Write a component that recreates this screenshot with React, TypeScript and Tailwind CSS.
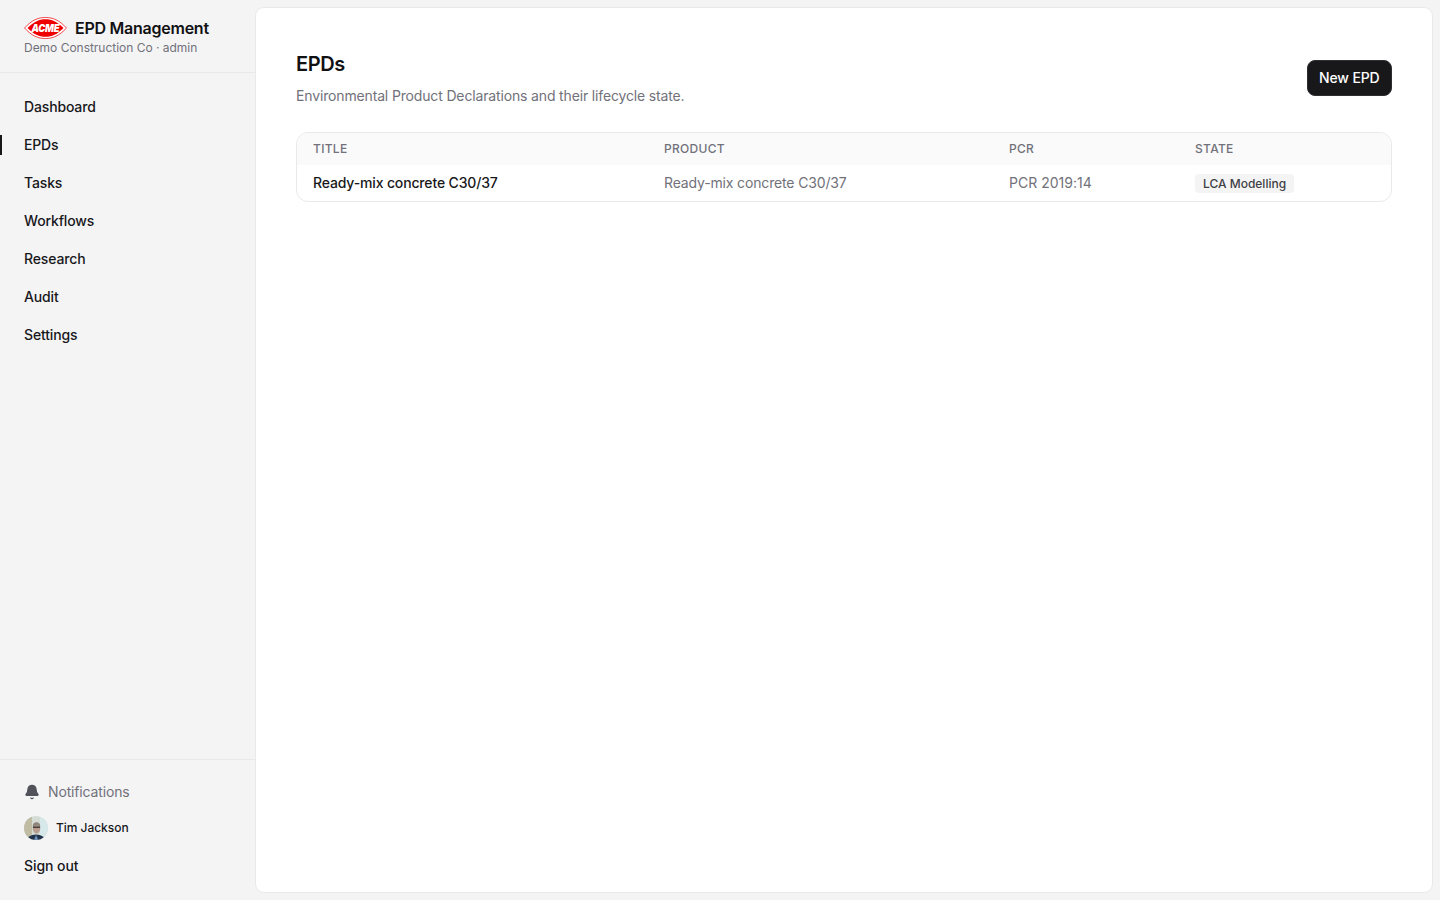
import { Bell } from "lucide-react";

const navItems = ["Dashboard", "EPDs", "Tasks", "Workflows", "Research", "Audit", "Settings"];

function AcmeLogo() {
  return (
    <div className="relative w-[43px] h-[22px] shrink-0">
      <svg viewBox="0 0 43 22" className="w-[43px] h-[22px]">
        <path d="M0.5 11 C8 3 14 0.5 21.5 0.5 C29 0.5 35 3 42.5 11 C35 19 29 21.500 21.5 21.500 C14 21.500 8 19 0.5 11 Z" fill="#fff" stroke="#ee1c25" strokeWidth="0.8" />
        <path d="M3.500 11 C10 4.500 15 2.200 21.5 2.200 C28 2.200 33 4.500 39.500 11 C33 17.500 28 19.800 21.500 19.800 C15 19.800 10 17.500 3.500 11 Z" fill="#ee0000" />
      </svg>
      <span className="absolute inset-0 flex items-center justify-center text-[11px] leading-none font-black italic tracking-[-0.2px] text-white font-['Inter',sans-serif] scale-x-[0.85]">
        ACME
      </span>
    </div>
  );
}

function Avatar() {
  return (
    <svg viewBox="0 0 24 24" className="w-6 h-6 rounded-full shrink-0">
      <rect width="24" height="24" fill="#d5dcd6" />
      <rect x="0" y="0" width="8" height="24" fill="#c0bca4" />
      <rect x="16" y="0" width="8" height="24" fill="#d6e8ea" />
      <path d="M2 24 Q4 19 12 18.500 Q20 19 22 24 Z" fill="#22324a" />
      <path d="M10 24 L12 19 L14.500 24 Z" fill="#6f8fb5" />
      <ellipse cx="12.500" cy="12" rx="3.800" ry="5.500" fill="#b89c8e" />
      <path d="M8.700 10.500 Q9 6.300 12.500 6.300 Q16 6.300 16.300 10.500 Q12.500 8.300 8.700 10.500 Z" fill="#8d847c" />
      <rect x="9" y="10.500" width="7" height="1.400" fill="#3d3633" />
    </svg>
  );
}

export default function App() {
  return (
    <div className="flex h-[900px] bg-[#f4f4f5] text-[#18181b] text-sm tracking-[-0.15px] font-['Inter',sans-serif]">
      <aside className="w-[256px] shrink-0 flex flex-col">
        <div className="h-[73px] border-b border-[#e9e9eb] px-6 pt-[17px]">
          <div className="flex items-center gap-2 h-[22px]">
            <AcmeLogo />
            <span className="text-base font-semibold leading-[22px] tracking-[-0.25px] text-[#111113]">EPD Management</span>
          </div>
          <div className="text-xs leading-4 mt-px tracking-[-0.02px] text-[#71717a]">Demo Construction Co · admin</div>
        </div>
        <nav className="flex flex-col flex-1 pt-[15px]">
          {navItems.map((item) => (
            <div key={item} className="relative h-[38px] flex items-center px-6 font-medium text-[#18181b]">
              {item === "EPDs" && <span className="absolute left-0 top-[9px] w-0.5 h-5 bg-[#18181b]" />}
              {item}
            </div>
          ))}
        </nav>
        <div className="h-[141px] border-t border-[#e9e9eb] px-6 pt-[24px]">
          <div className="flex items-center gap-2 h-4 text-[#71717a]">
            <Bell size={16} fill="#52525b" stroke="#52525b" strokeWidth={2} />
            <span>Notifications</span>
          </div>
          <div className="flex items-center gap-2 h-6 mt-[16px]">
            <Avatar />
            <span className="text-xs font-medium tracking-[-0.04px] text-[#18181b]">Tim Jackson</span>
          </div>
          <div className="mt-[16px] font-medium leading-5 tracking-[-0.08px] text-[#18181b]">Sign out</div>
        </div>
      </aside>
      <main className="flex-1 m-2 ml-0 h-[884px] bg-white ring-1 ring-[#e9e9eb] rounded-lg px-10 pt-[44px]">
        <div className="flex items-start justify-between">
          <div>
            <h1 className="text-xl leading-6 font-semibold tracking-[-0.4px] text-[#111113]">EPDs</h1>
            <p className="mt-[10px] leading-5 text-[#71717a]">Environmental Product Declarations and their lifecycle state.</p>
          </div>
          <button className="mt-[8px] h-9 px-[11.5px] rounded-lg bg-[#18181b] border border-[#2e2e32] text-white font-medium">New EPD</button>
        </div>
        <div className="mt-[26px] border border-[#e9e9eb] rounded-xl overflow-hidden">
          <div className="grid grid-cols-[351px_345px_186px_1fr] h-[32px] items-center bg-[#fafafa] px-4 text-xs tracking-[0.3px] font-medium text-[#71717a]">
            <span>TITLE</span>
            <span>PRODUCT</span>
            <span>PCR</span>
            <span>STATE</span>
          </div>
          <div className="grid grid-cols-[351px_345px_186px_1fr] h-[36px] items-center px-4 text-[#71717a]">
            <span className="font-medium text-[#18181b]">Ready-mix concrete C30/37</span>
            <span>Ready-mix concrete C30/37</span>
            <span className="tracking-[0.02px]">PCR 2019:14</span>
            <span>
              <span className="inline-block h-[19px] leading-[19px] px-2 rounded bg-[#f4f4f5] text-xs font-medium tracking-normal text-[#3f3f46]">LCA Modelling</span>
            </span>
          </div>
        </div>
      </main>
    </div>
  );
}
